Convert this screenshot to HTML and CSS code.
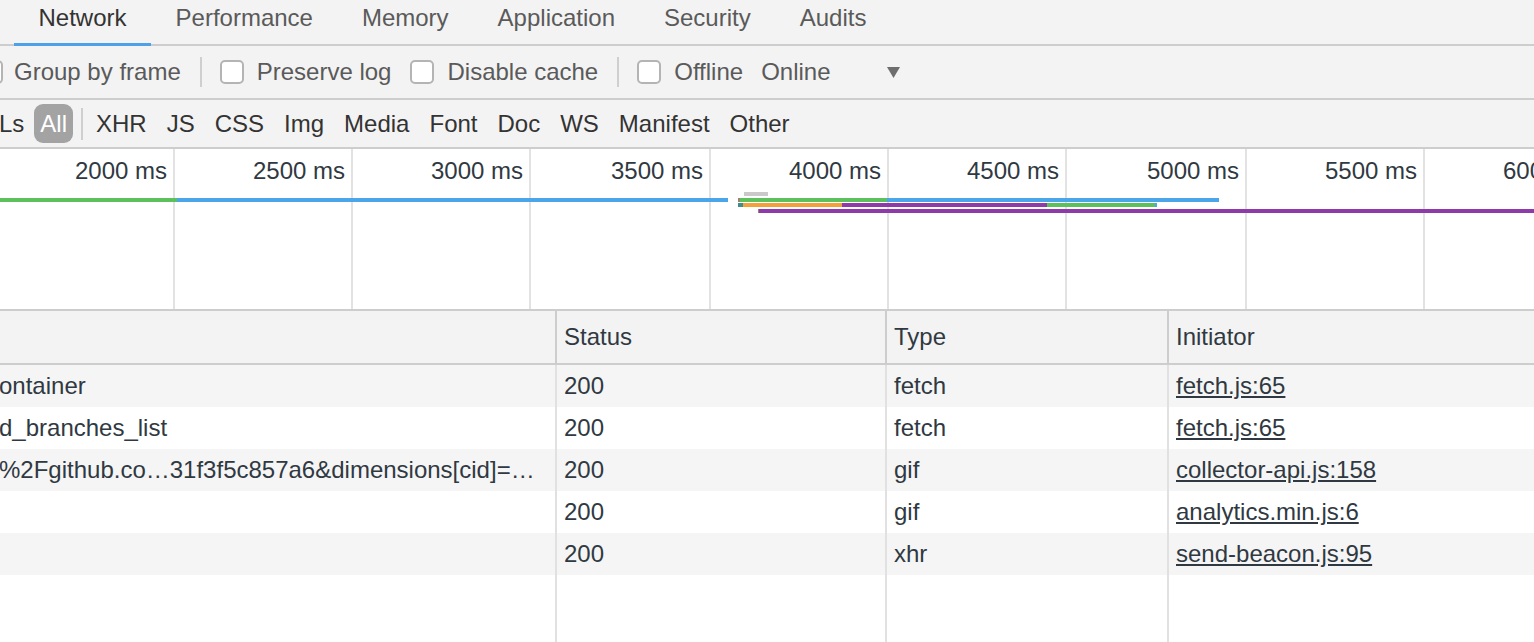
FILE: index.html
```html
<!DOCTYPE html>
<html>
<head>
<meta charset="utf-8">
<title>Network</title>
<link rel="stylesheet" href="styles.css">
</head>
<body>
<div class="panel">
  <div class="tabbar">
    <div class="tab active">Network</div>
    <div class="tab">Performance</div>
    <div class="tab">Memory</div>
    <div class="tab">Application</div>
    <div class="tab">Security</div>
    <div class="tab">Audits</div>
  </div>

  <div class="toolbar">
    <label class="opt opt-first"><span class="cb"></span><span>Group by frame</span></label>
    <span class="sep"></span>
    <label class="opt"><span class="cb"></span><span>Preserve log</span></label>
    <label class="opt"><span class="cb"></span><span>Disable cache</span></label>
    <span class="sep"></span>
    <label class="opt"><span class="cb"></span><span>Offline</span></label>
    <div class="select">
      <span>Online</span>
      <svg class="caret" width="13" height="11" viewBox="0 0 13 11"><polygon points="0,0 13,0 6.5,11" fill="#6e6e6e"/></svg>
    </div>
  </div>

  <div class="filterbar">
    <span class="fitem fitem-ls">Ls</span>
    <span class="fitem pill">All</span>
    <span class="fsep"></span>
    <span class="fitem">XHR</span>
    <span class="fitem">JS</span>
    <span class="fitem">CSS</span>
    <span class="fitem">Img</span>
    <span class="fitem">Media</span>
    <span class="fitem">Font</span>
    <span class="fitem">Doc</span>
    <span class="fitem">WS</span>
    <span class="fitem">Manifest</span>
    <span class="fitem">Other</span>
  </div>

  <div class="timeline">
    <div class="divs">
      <div class="div w175">2000 ms</div>
      <div class="div w178">2500 ms</div>
      <div class="div w178">3000 ms</div>
      <div class="div w180">3500 ms</div>
      <div class="div w178">4000 ms</div>
      <div class="div w178">4500 ms</div>
      <div class="div w180">5000 ms</div>
      <div class="div w178">5500 ms</div>
      <div class="div w178">6000 ms</div>
    </div>
    <div class="bar green" style="left:0;top:49px;width:177px"></div>
    <div class="bar blue" style="left:177px;top:49px;width:551px"></div>
    <div class="bar grey" style="left:744px;top:43px;width:24px"></div>
    <div class="bar brown" style="left:738px;top:49px;width:2px"></div>
    <div class="bar green" style="left:740px;top:49px;width:147px"></div>
    <div class="bar blue" style="left:887px;top:49px;width:332px"></div>
    <div class="bar teal" style="left:738px;top:54px;width:5px"></div>
    <div class="bar orange" style="left:743px;top:54px;width:99px"></div>
    <div class="bar purple" style="left:842px;top:54px;width:205px"></div>
    <div class="bar green" style="left:1047px;top:54px;width:108px"></div>
    <div class="bar blue" style="left:1155px;top:54px;width:2px"></div>
    <div class="bar brown" style="left:758px;top:60px;width:1px"></div>
    <div class="bar purple" style="left:759px;top:60px;width:800px"></div>
  </div>

  <div class="grid">
    <div class="col col-name">
      <div class="hcell"></div>
      <div class="cell odd name">ontainer</div>
      <div class="cell name">d_branches_list</div>
      <div class="cell odd name">%2Fgithub.co…31f3f5c857a6&amp;dimensions[cid]=…</div>
      <div class="cell name"></div>
      <div class="cell odd name"></div>
      <div class="fill"></div>
    </div>
    <div class="col col-status">
      <div class="hcell">Status</div>
      <div class="cell odd">200</div>
      <div class="cell">200</div>
      <div class="cell odd">200</div>
      <div class="cell">200</div>
      <div class="cell odd">200</div>
      <div class="fill"></div>
    </div>
    <div class="col col-type">
      <div class="hcell">Type</div>
      <div class="cell odd">fetch</div>
      <div class="cell">fetch</div>
      <div class="cell odd">gif</div>
      <div class="cell">gif</div>
      <div class="cell odd">xhr</div>
      <div class="fill"></div>
    </div>
    <div class="col col-init">
      <div class="hcell">Initiator</div>
      <div class="cell odd"><a class="link">fetch.js:65</a></div>
      <div class="cell"><a class="link">fetch.js:65</a></div>
      <div class="cell odd"><a class="link">collector-api.js:158</a></div>
      <div class="cell"><a class="link">analytics.min.js:6</a></div>
      <div class="cell odd"><a class="link">send-beacon.js:95</a></div>
      <div class="fill"></div>
    </div>
  </div>
</div>
</body>
</html>
```

FILE: styles.css
```css
html, body {
  margin: 0;
  padding: 0;
  width: 1534px;
  height: 642px;
  overflow: hidden;
  background: #ffffff;
}

.panel {
  font-family: "Liberation Sans", Arial, sans-serif;
  font-size: 24px;
  color: #303942;
  display: flex;
  flex-direction: column;
  height: 642px;
  overflow: hidden;
}

/* Tabs */
.tabbar {
  display: flex;
  align-items: flex-start;
  height: 46px;
  box-sizing: border-box;
  background: #f3f3f3;
  border-bottom: 2px solid #cdcdcd;
  padding-left: 14px;
  flex: none;
}
.tab {
  position: relative;
  padding: 0 24.5px;
  line-height: 36px;
  height: 44px;
  color: #5a5a5a;
  white-space: nowrap;
}
.tab.active {
  color: #333333;
}
.tab.active::after {
  content: "";
  position: absolute;
  left: 0;
  right: 0;
  bottom: -2px;
  height: 3px;
  background: #4ea1e8;
}

/* Toolbar */
.toolbar {
  display: flex;
  align-items: center;
  height: 54px;
  box-sizing: border-box;
  background: #f3f3f3;
  border-bottom: 2px solid #cdcdcd;
  color: #5a5a5a;
  flex: none;
  white-space: nowrap;
}
.opt {
  display: flex;
  align-items: center;
  gap: 13px;
  margin-right: 19px;
}
.opt-first {
  margin-left: -21px;
  gap: 11px;
}
.cb {
  display: inline-block;
  width: 24px;
  height: 24px;
  box-sizing: border-box;
  border: 2px solid #b4b4b4;
  border-radius: 5px;
  background: #ffffff;
}
.sep {
  width: 2px;
  height: 30px;
  background: #cfcfcf;
  margin-right: 18px;
}
.select {
  display: flex;
  align-items: center;
  margin-left: -1px;
}
.caret {
  margin-left: 56px;
  margin-top: 1px;
}

/* Filter bar */
.filterbar {
  display: flex;
  align-items: center;
  gap: 8px;
  height: 49px;
  box-sizing: border-box;
  background: #f3f3f3;
  border-bottom: 2px solid #cdcdcd;
  color: #333333;
  flex: none;
  white-space: nowrap;
}
.fitem {
  padding: 0 6px;
  line-height: 39px;
}
.fitem-ls {
  margin-left: -7px;
  padding-right: 2px;
}
.pill {
  background: #a3a3a3;
  color: #ffffff;
  border-radius: 9px;
  height: 39px;
}
.fsep {
  width: 2px;
  height: 32px;
  background: #cfcfcf;
  margin: 0 -1px 0 0;
}

/* Timeline */
.timeline {
  position: relative;
  height: 162px;
  box-sizing: border-box;
  border-bottom: 2px solid #cdcdcd;
  background: #ffffff;
  overflow: hidden;
  flex: none;
}
.divs {
  display: flex;
  height: 100%;
}
.div {
  flex: none;
  box-sizing: border-box;
  border-right: 2px solid #e2e2e2;
  text-align: right;
  padding: 8px 6px 0 0;
  line-height: 28px;
  white-space: nowrap;
  color: #303942;
}
.w175 { width: 175px; }
.w178 { width: 178px; }
.w180 { width: 180px; }

.bar {
  position: absolute;
  height: 4px;
}
.green { background: #5cc15c; }
.blue { background: #4aa6e9; }
.grey { background: #c9c9c9; }
.brown { background: #a08070; }
.teal { background: #3f8f86; }
.orange { background: #f2a03a; }
.purple { background: #8e3aa8; }

/* Grid */
.grid {
  display: flex;
  flex: 1;
  min-height: 0;
}
.col {
  display: flex;
  flex-direction: column;
  flex: none;
}
.col-name { width: 557px; }
.col-status { width: 330px; }
.col-type { width: 282px; }
.col-init { flex: 1; }

.hcell {
  height: 54px;
  box-sizing: border-box;
  background: #f3f3f3;
  border-bottom: 2px solid #cdcdcd;
  border-right: 2px solid #cdcdcd;
  padding-left: 7px;
  line-height: 52px;
  white-space: nowrap;
  flex: none;
}
.cell {
  height: 42px;
  line-height: 42px;
  box-sizing: border-box;
  border-right: 2px solid #e1e1e1;
  padding-left: 7px;
  white-space: nowrap;
  overflow: hidden;
  flex: none;
}
.cell.odd {
  background: #f5f5f5;
}
.cell.name {
  padding-left: 0;
  margin-left: -1px;
}
.fill {
  flex: 1;
  border-right: 2px solid #e1e1e1;
}
.col-init .hcell,
.col-init .cell,
.col-init .fill {
  border-right: none;
}
.link {
  color: #303942;
  text-decoration: underline;
}
```
